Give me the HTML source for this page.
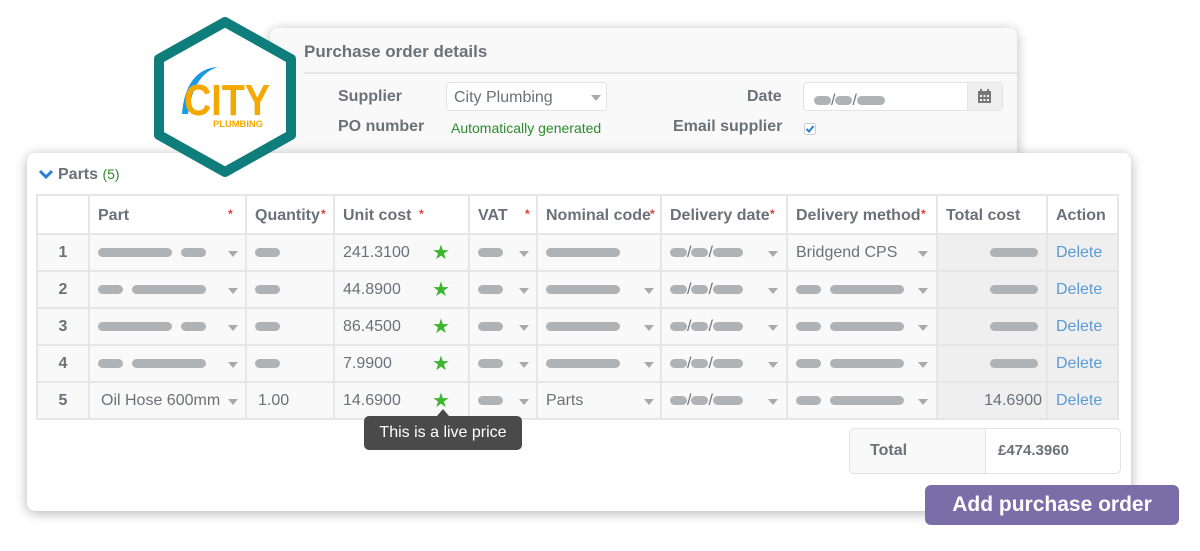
<!DOCTYPE html>
<html><head><meta charset="utf-8"><style>
*{box-sizing:border-box;margin:0;padding:0}
body{width:1200px;height:551px;background:#fff;font-family:"Liberation Sans",Arial,sans-serif;position:relative;overflow:hidden;color:#6b7178}
.abs{position:absolute}
.top{left:270px;top:28px;width:747px;height:132px;background:#f9f9f9;border-radius:8px;box-shadow:0 2px 12px rgba(0,0,0,.28)}
.front{left:27px;top:153px;width:1104px;height:358px;background:#fff;border-radius:8px;box-shadow:0 2px 12px rgba(0,0,0,.3)}
.lbl{font-weight:bold;font-size:16px;color:#6b7178}
table{position:absolute;left:36px;top:194px;border-collapse:collapse;font-size:16px}
td,th{border:2px solid #e6e6e6;padding:0 0 0 8px;position:relative;white-space:nowrap}
th{height:39px;text-align:left;background:#fff;font-weight:bold;color:#6b7178;padding-top:3px}
td{height:37px;background:#f9f9f9;color:#6b7178}
.req{color:#e03a3a;font-size:12px;position:absolute;top:11px}
.p{display:inline-block;height:9px;border-radius:5px;background:#b0b3b6;vertical-align:middle}
.dd{position:absolute;top:16px;width:0;height:0;border-left:5px solid transparent;border-right:5px solid transparent;border-top:6px solid #aaa}
.star{position:absolute;left:97px;top:5px;color:#3cb531;font-size:20px}
.gray{background:#efefef}
.del{color:#5b9bd5}
.num{text-align:center;padding:0;font-weight:bold}
</style></head><body>
<div class="abs top"></div>
<div class="abs" style="left:304px;top:42px;font-size:17px;font-weight:bold;color:#6b7178">Purchase order details</div>
<div class="abs" style="left:304px;top:72px;width:713px;height:2px;background:#e6e6e6"></div>
<div class="abs lbl" style="left:338px;top:88px">Supplier</div>
<div class="abs lbl" style="left:338px;top:118px">PO number</div>
<div class="abs" style="left:446px;top:82px;width:161px;height:29px;border:1px solid #e3e3e3;border-radius:4px;background:#fff;font-size:16px;padding:6px 0 0 7px">City Plumbing<span class="dd" style="left:144px;top:12px"></span></div>
<div class="abs" style="left:451px;top:120px;font-size:14px;color:#2e8b2e">Automatically generated</div>
<div class="abs lbl" style="left:747px;top:88px">Date</div>
<div class="abs lbl" style="left:673px;top:118px">Email supplier</div>
<div class="abs" style="left:803px;top:82px;width:200px;height:29px;border:1px solid #e3e3e3;border-radius:4px;background:#fff"></div>
<div class="abs" style="left:967px;top:83px;width:35px;height:27px;background:#efefef;border-left:1px solid #e3e3e3"></div>
<svg class="abs" style="left:978px;top:89px" width="13" height="14" viewBox="0 0 13 14"><rect x="0" y="2" width="13" height="12" fill="#777"/><rect x="2" y="0" width="2" height="3" fill="#777"/><rect x="9" y="0" width="2" height="3" fill="#777"/><g fill="#efefef"><rect x="2" y="6" width="2" height="2"/><rect x="5.5" y="6" width="2" height="2"/><rect x="9" y="6" width="2" height="2"/><rect x="2" y="10" width="2" height="2"/><rect x="5.5" y="10" width="2" height="2"/><rect x="9" y="10" width="2" height="2"/></g></svg>
<div class="abs" style="left:814px;top:92px"><span class="p" style="width:17px"></span>/<span class="p" style="width:17px"></span>/<span class="p" style="width:28px"></span></div>
<svg class="abs" style="left:804px;top:123px" width="12" height="12"><rect x=".5" y=".5" width="11" height="11" rx="2" fill="#fff" stroke="#ccc"/><path d="M2.5 6 L5 8.5 L9.5 3" stroke="#2a7fd4" stroke-width="2" fill="none"/></svg>

<div class="abs front"></div>

<svg class="abs" style="left:148px;top:14px;z-index:5" width="154" height="166" viewBox="0 0 154 166"><polygon points="77,8 143,45 143,121 77,158 11,121 11,45" fill="#fff" stroke="#0f7d7b" stroke-width="10" stroke-linejoin="round"/>
<path d="M34 100 C36 72 48 54 70 53 C54 58 44 72 40 100 Z" fill="#1a9ae0"/>
<text x="36" y="101" font-family="Liberation Sans Narrow, Liberation Sans" font-weight="bold" font-size="44" fill="#f5a800" textLength="86" lengthAdjust="spacingAndGlyphs">CITY</text>
<text x="65" y="113" font-family="Liberation Sans" font-weight="bold" font-size="9" fill="#f5a800" textLength="50" lengthAdjust="spacingAndGlyphs">PLUMBING</text></svg>

<svg class="abs" style="left:38px;top:169px" width="16" height="12"><path d="M2 2 L8 8 L14 2" stroke="#2a7fd4" stroke-width="3" fill="none"/></svg>
<div class="abs" style="left:58px;top:166px;font-size:16px;font-weight:bold;color:#6b7178">Parts <span style="font-size:14px;font-weight:normal;color:#2e8b2e">(5)</span></div>

<table>
<colgroup><col style="width:52px"><col style="width:157px"><col style="width:88px"><col style="width:135px"><col style="width:68px"><col style="width:124px"><col style="width:126px"><col style="width:150px"><col style="width:110px"><col style="width:71px"></colgroup>
<tr><th></th><th>Part<span class="req" style="left:138px">*</span></th><th>Quantity <span class="req" style="left:74px">*</span></th><th>Unit cost<span class="req" style="left:84px">*</span></th><th>VAT<span class="req" style="left:55px">*</span></th><th>Nominal code<span class="req" style="left:112px">*</span></th><th>Delivery date<span class="req" style="left:108px">*</span></th><th>Delivery method<span class="req" style="left:133px">*</span></th><th>Total cost</th><th>Action</th></tr>
<tr><td class="num">1</td><td><span class="p" style="width:74px"></span> &nbsp;<span class="p" style="width:25px"></span><span class="dd" style="left:138px"></span></td><td><span class="p" style="width:25px"></span></td><td>241.3100<span class="star">★</span></td><td><span class="p" style="width:25px"></span><span class="dd" style="left:49px"></span></td><td><span class="p" style="width:74px"></span></td><td><span class="p" style="width:17px"></span>/<span class="p" style="width:17px"></span>/<span class="p" style="width:30px"></span><span class="dd" style="left:106px"></span></td><td>Bridgend CPS<span class="dd" style="left:130px"></span></td><td class="gray" style="text-align:right;padding-right:8px"><span class="p" style="width:48px"></span></td><td class="gray del">Delete</td></tr>
<tr><td class="num">2</td><td><span class="p" style="width:25px"></span> &nbsp;<span class="p" style="width:74px"></span><span class="dd" style="left:138px"></span></td><td><span class="p" style="width:25px"></span></td><td>44.8900<span class="star">★</span></td><td><span class="p" style="width:25px"></span><span class="dd" style="left:49px"></span></td><td><span class="p" style="width:74px"></span><span class="dd" style="left:106px"></span></td><td><span class="p" style="width:17px"></span>/<span class="p" style="width:17px"></span>/<span class="p" style="width:30px"></span><span class="dd" style="left:106px"></span></td><td><span class="p" style="width:25px"></span> &nbsp;<span class="p" style="width:74px"></span><span class="dd" style="left:130px"></span></td><td class="gray" style="text-align:right;padding-right:8px"><span class="p" style="width:48px"></span></td><td class="gray del">Delete</td></tr>
<tr><td class="num">3</td><td><span class="p" style="width:74px"></span> &nbsp;<span class="p" style="width:25px"></span><span class="dd" style="left:138px"></span></td><td><span class="p" style="width:25px"></span></td><td>86.4500<span class="star">★</span></td><td><span class="p" style="width:25px"></span><span class="dd" style="left:49px"></span></td><td><span class="p" style="width:74px"></span><span class="dd" style="left:106px"></span></td><td><span class="p" style="width:17px"></span>/<span class="p" style="width:17px"></span>/<span class="p" style="width:30px"></span><span class="dd" style="left:106px"></span></td><td><span class="p" style="width:25px"></span> &nbsp;<span class="p" style="width:74px"></span><span class="dd" style="left:130px"></span></td><td class="gray" style="text-align:right;padding-right:8px"><span class="p" style="width:48px"></span></td><td class="gray del">Delete</td></tr>
<tr><td class="num">4</td><td><span class="p" style="width:25px"></span> &nbsp;<span class="p" style="width:74px"></span><span class="dd" style="left:138px"></span></td><td><span class="p" style="width:25px"></span></td><td>7.9900<span class="star">★</span></td><td><span class="p" style="width:25px"></span><span class="dd" style="left:49px"></span></td><td><span class="p" style="width:74px"></span><span class="dd" style="left:106px"></span></td><td><span class="p" style="width:17px"></span>/<span class="p" style="width:17px"></span>/<span class="p" style="width:30px"></span><span class="dd" style="left:106px"></span></td><td><span class="p" style="width:25px"></span> &nbsp;<span class="p" style="width:74px"></span><span class="dd" style="left:130px"></span></td><td class="gray" style="text-align:right;padding-right:8px"><span class="p" style="width:48px"></span></td><td class="gray del">Delete</td></tr>
<tr><td class="num">5</td><td style="padding-left:11px">Oil Hose 600mm<span class="dd" style="left:138px"></span></td><td style="padding-left:11px">1.00</td><td>14.6900<span class="star">★</span></td><td><span class="p" style="width:25px"></span><span class="dd" style="left:49px"></span></td><td>Parts<span class="dd" style="left:106px"></span></td><td><span class="p" style="width:17px"></span>/<span class="p" style="width:17px"></span>/<span class="p" style="width:30px"></span><span class="dd" style="left:106px"></span></td><td><span class="p" style="width:25px"></span> &nbsp;<span class="p" style="width:74px"></span><span class="dd" style="left:130px"></span></td><td class="gray" style="text-align:right;padding-right:4px">14.6900</td><td class="gray del">Delete</td></tr>
</table>

<div class="abs" style="left:437px;top:409px;width:0;height:0;border-left:6px solid transparent;border-right:6px solid transparent;border-bottom:7px solid #4a4a4a"></div>
<div class="abs" style="left:364px;top:416px;width:158px;height:34px;background:#4a4a4a;border-radius:5px;color:#fff;font-size:16px;text-align:center;line-height:34px">This is a live price</div>

<div class="abs" style="left:849px;top:428px;width:272px;height:46px;border:1px solid #e3e3e3;border-radius:5px;background:#f9f9f9"></div>
<div class="abs" style="left:985px;top:429px;width:135px;height:44px;background:#fff;border-left:1px solid #e3e3e3;border-radius:0 5px 5px 0"></div>
<div class="abs lbl" style="left:870px;top:442px">Total</div>
<div class="abs" style="left:998px;top:442px;font-size:15px;font-weight:bold;color:#6b7178">£474.3960</div>

<div class="abs" style="left:925px;top:485px;width:254px;height:40px;background:#7a6ea9;border-radius:6px;color:#fff;font-size:21px;font-weight:bold;text-align:center;line-height:40px">Add purchase order</div>
</body></html>
